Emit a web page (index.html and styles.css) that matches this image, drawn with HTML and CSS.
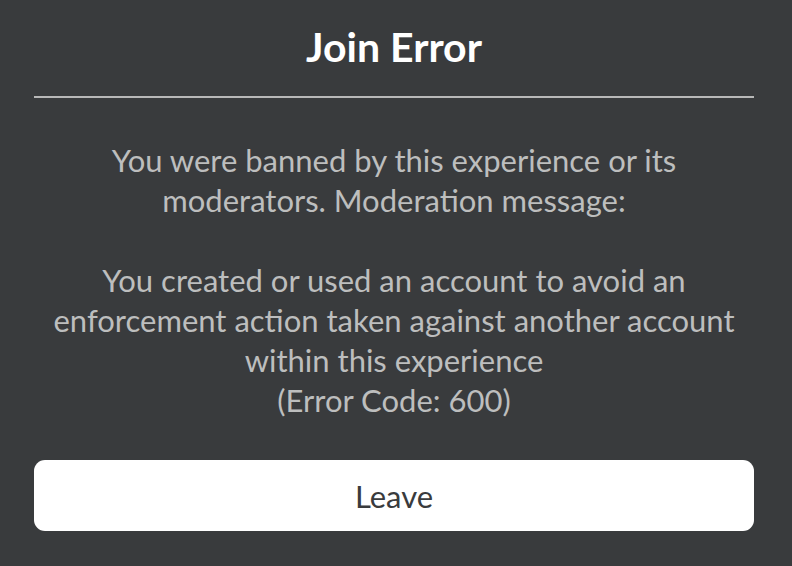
FILE: index.html
```html
<!DOCTYPE html>
<html lang="en">
<head>
  <meta charset="UTF-8" />
  <title>Join Error</title>
  <link rel="stylesheet" href="styles.css">
</head>
<body>

  <div class="dialog">
    <h1 class="title">Join Error</h1>
    <div class="divider"></div>

    <p class="message">
      You were banned by this experience or its<br>
      moderators. Moderation message:<br>
      <br>
      You created or used an account to avoid an<br>
      enforcement action taken against another account<br>
      within this experience<br>
      (Error Code: 600)
    </p>

    <button class="leave">Leave</button>
  </div>

</body>
</html>
```

FILE: styles.css
```css
body {
  margin: 0;
  background: #393b3d;
  font-family: Lato, 'Noto Sans', sans-serif;
}
.dialog {
  padding: 25px 38px 0 34px;
  display: flex;
  flex-direction: column;
}
.title {
  margin: 0;
  height: 44px;
  line-height: 44px;
  font-size: 41px;
  font-weight: bold;
  color: #fff;
  text-align: center;
}
.divider {
  margin-top: 27px;
  height: 2px;
  background: #b8b8b8;
}
.message {
  margin: 42px 0 0;
  font-size: 31px;
  line-height: 40px;
  color: #bdbebe;
  text-align: center;
  white-space: nowrap;
}
.leave {
  margin-top: 40px;
  height: 71px;
  border: none;
  border-radius: 11px;
  background: #fff;
  color: #393b3d;
  font-family: inherit;
  font-size: 31px;
  cursor: pointer;
}
```
